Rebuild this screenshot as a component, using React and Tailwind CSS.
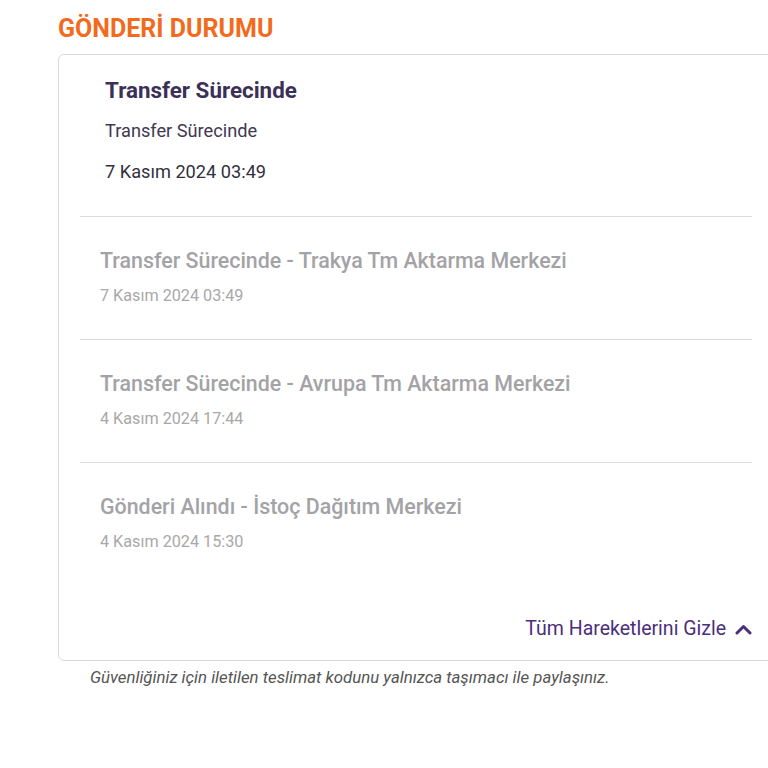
const events = [
  { title: 'Transfer Sürecinde - Trakya Tm Aktarma Merkezi', date: '7 Kasım 2024 03:49' },
  { title: 'Transfer Sürecinde - Avrupa Tm Aktarma Merkezi', date: '4 Kasım 2024 17:44' },
  { title: 'Gönderi Alındı - İstoç Dağıtım Merkezi', date: '4 Kasım 2024 15:30' },
]

function EventRow({ title, date, last }) {
  return (
    <div className={`pl-[20px] pt-[30px] ${last ? 'pb-[10px]' : 'pb-[33px] border-b border-[#dcdcdc]'}`}>
      <div className="text-[21.4px] leading-[28px] font-medium text-[#a3a3a6] whitespace-nowrap">{title}</div>
      <div className="mt-[11px] text-[16.2px] leading-[20px] text-[#a8a8a8]">{date}</div>
    </div>
  )
}

function Chevron() {
  return (
    <svg width="17" height="12" viewBox="0 0 17 12" fill="none" className="text-[#4b2e7c]">
      <polyline points="2,10 8.5,3.5 15,10" stroke="currentColor" strokeWidth="3" strokeLinecap="round" strokeLinejoin="round" />
    </svg>
  )
}

export default function App() {
  return (
    <div className="min-h-screen bg-white overflow-hidden pl-[58px] pt-[14px] font-['Roboto',sans-serif]">
      <h2 className="text-[25px] leading-[30px] font-bold text-[#f26b1d] whitespace-nowrap">GÖNDERİ DURUMU</h2>

      <div className="mt-[10px] w-[716px] border border-[#dadada] rounded-[6px] px-[21px]">
        <div className="pl-[25px] pt-[21px] pb-[33px] border-b border-[#dcdcdc]">
          <div className="text-[22.4px] leading-[28px] font-bold text-[#3b3057]">Transfer Sürecinde</div>
          <div className="mt-[16px] text-[18.2px] leading-[22px] text-[#3f3852]">Transfer Sürecinde</div>
          <div className="mt-[19px] text-[18.2px] leading-[22px] text-[#33303d]">7 Kasım 2024 03:49</div>
        </div>

        {events.map((e, i) => (
          <EventRow key={i} title={e.title} date={e.date} last={i === events.length - 1} />
        ))}

        <div className="flex justify-end items-center gap-[9px] pt-[55px] pb-[19px]">
          <span className="text-[19.5px] leading-[24px] text-[#4b2e7c] whitespace-nowrap">Tüm Hareketlerini Gizle</span>
          <Chevron />
        </div>
      </div>

      <p className="mt-[6px] pl-[32px] text-[16.8px] leading-[20px] italic text-[#555] whitespace-nowrap">
        Güvenliğiniz için iletilen teslimat kodunu yalnızca taşımacı ile paylaşınız.
      </p>
    </div>
  )
}
